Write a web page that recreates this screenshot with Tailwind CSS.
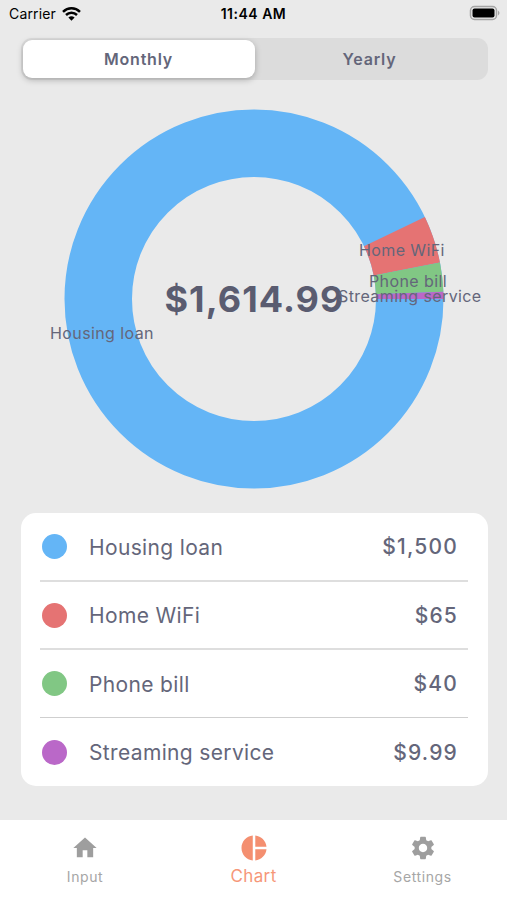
<!DOCTYPE html>
<html lang="en">
<head>
    <meta charset="UTF-8">
    <meta name="viewport" content="width=device-width, initial-scale=1.0">
    <title>Chart</title>
    <script src="https://cdn.jsdelivr.net/npm/@tailwindcss/browser@4"></script>
</head>
<body class="w-[507px] h-[900px] overflow-hidden flex flex-col bg-[#eaeaea] text-[#64667a] font-[Inter,sans-serif]">
    <!-- status bar -->
    <header class="h-[38px] shrink-0 grid grid-cols-3 items-start pt-1 pl-[9px] pr-[7px] text-black text-[14px] leading-5">
        <div class="flex items-center gap-[6px]">
            <span class="tracking-[0.15px]">Carrier</span>
            <svg class="w-[19px] h-[14px] -mt-px" viewBox="0 0 19 14" fill="none" stroke="#000" stroke-width="2.5">
                <path d="M1 4.8a12.2 12.2 0 0 1 17 0" />
                <path d="M4 8a8 8 0 0 1 11 0" />
                <path d="M9.5 13.7L6.4 10.6a4.5 4.5 0 0 1 6.2 0z" fill="#000" stroke="none" />
            </svg>
        </div>
        <div class="text-center font-semibold whitespace-nowrap tracking-[0.5px] pr-[2px]">11:44 AM</div>
        <svg class="w-[31px] h-[16px] justify-self-end mt-[1px]" viewBox="0 0 31 16">
            <rect x="1.5" y="1.5" width="26" height="13" rx="4" fill="#eaeaea" stroke="#a5a5a5" stroke-width="1.5" />
            <rect x="3.5" y="3.5" width="22" height="9" rx="2" fill="#000" />
            <path d="M29 5.5q3 2.5 0 5z" fill="#a5a5a5" />
        </svg>
    </header>

    <!-- period switch -->
    <div class="ml-[21px] w-[467px] h-[42px] shrink-0 rounded-[11px] bg-[#dcdcdc] p-[2px] flex text-[16px] font-semibold tracking-[0.8px]">
        <button class="w-[232px] rounded-[9px] bg-white pr-px shadow-[0_2px_6px_rgba(0,0,0,0.25)]">Monthly</button>
        <button class="flex-1 pr-[2px]">Yearly</button>
    </div>

    <!-- donut: the loan fills the ring, the smaller slices lie on it as dashes measured in dollars -->
    <svg class="w-[507px] h-[433px] shrink-0" viewBox="0 80 507 433">
        <g fill="none" stroke-width="67.5">
            <circle cx="254" cy="299" r="155.75" stroke="#64b5f6" />
            <circle cx="254" cy="299" r="155.75" pathLength="1614.99" stroke="#e57373" stroke-dasharray="65 1549.99" stroke-dashoffset="-1500" />
            <circle cx="254" cy="299" r="155.75" pathLength="1614.99" stroke="#81c784" stroke-dasharray="40 1574.99" stroke-dashoffset="-1565" />
            <circle cx="254" cy="299" r="155.75" pathLength="1614.99" stroke="#ba68c8" stroke-dasharray="9.99 1605" stroke-dashoffset="-1605" />
        </g>
        <text x="164.5" y="311.5" class="text-[36px] font-bold tracking-[1.05px]" fill="#5a5c70">$1,614.99</text>
        <g class="text-[16px] tracking-[0.4px]" fill="#64667a">
            <text x="50" y="339">Housing loan</text>
            <text x="359" y="255.5">Home WiFi</text>
            <text x="369" y="286.5">Phone bill</text>
            <text x="338" y="301.5">Streaming service</text>
        </g>
    </svg>

    <!-- expenses -->
    <ul class="ml-[21px] w-[467px] h-[273px] shrink-0 rounded-[15px] bg-white pl-[19px] pr-[20px] flex flex-col text-[21px] tracking-[0.35px]">
        <li class="h-[69px] flex items-center border-b-2 border-[#dedede] pl-[2px] pr-[10px]">
            <span class="size-[25px] rounded-full bg-[#64b5f6]"></span>
            <span class="ml-[22px] pt-[2px] flex-1">Housing loan</span>
            <span class="font-medium tracking-[1.2px]">$1,500</span>
        </li>
        <li class="h-[68px] flex items-center border-b-2 border-[#dedede] pl-[2px] pr-[10px]">
            <span class="size-[25px] rounded-full bg-[#e57373]"></span>
            <span class="ml-[22px] pt-[2px] flex-1">Home WiFi</span>
            <span class="pt-px font-medium tracking-[1.2px]">$65</span>
        </li>
        <li class="h-[68px] flex items-center border-b border-[#cfcfcf] pl-[2px] pr-[10px]">
            <span class="size-[25px] rounded-full bg-[#81c784]"></span>
            <span class="ml-[22px] pt-[2px] flex-1">Phone bill</span>
            <span class="font-medium tracking-[1.2px]">$40</span>
        </li>
        <li class="h-[68px] flex items-center pl-[2px] pr-[10px]">
            <span class="size-[25px] rounded-full bg-[#ba68c8]"></span>
            <span class="ml-[22px] pt-[2px] flex-1">Streaming service</span>
            <span class="pt-px font-medium tracking-[1.2px]">$9.99</span>
        </li>
    </ul>

    <!-- tabs -->
    <nav class="mt-auto h-[80px] shrink-0 bg-white grid grid-cols-3 text-[14px] tracking-[0.6px] text-[#a6a6a6]">
        <a class="flex flex-col items-center pt-[14px]">
            <svg class="size-[28px]" viewBox="0 0 24 24" fill="#9e9e9e"><path d="M10 20v-6h4v6h5v-8h3L12 3 2 12h3v8z" /></svg>
            <span class="mt-[5px] pl-px leading-5">Input</span>
        </a>
        <a class="flex flex-col items-center pt-[13px] text-[17px] tracking-[0.4px] text-[#f69779]">
            <svg class="size-[30px]" viewBox="0 0 24 24" fill="#f48f70"><path d="M11 2v20c-5.07-.5-9-4.79-9-10s3.93-9.5 9-10zm2.03 0v8.99H22c-.47-4.74-4.24-8.52-8.97-8.99zm0 11.01V22c4.74-.47 8.5-4.25 8.97-8.99h-8.97z" /></svg>
            <span class="mt-[3px] leading-5">Chart</span>
        </a>
        <a class="flex flex-col items-center pt-[14px]">
            <svg class="size-[28px]" viewBox="0 0 24 24" fill="#9e9e9e"><path d="M19.14 12.94c.04-.3.06-.61.06-.94 0-.32-.02-.64-.07-.94l2.03-1.58c.18-.14.23-.41.12-.61l-1.92-3.32c-.12-.22-.37-.29-.59-.22l-2.39.96c-.5-.38-1.03-.7-1.62-.94l-.36-2.54c-.04-.24-.24-.41-.48-.41h-3.84c-.24 0-.43.17-.47.41l-.36 2.54c-.59.24-1.13.57-1.62.94l-2.39-.96c-.22-.08-.47 0-.59.22L2.74 8.87c-.12.21-.08.47.12.61l2.03 1.58c-.05.3-.09.63-.09.94s.02.64.07.94l-2.03 1.58c-.18.14-.23.41-.12.61l1.92 3.32c.12.22.37.29.59.22l2.39-.96c.5.38 1.03.7 1.62.94l.36 2.54c.05.24.24.41.48.41h3.84c.24 0 .44-.17.47-.41l.36-2.54c.59-.24 1.13-.56 1.62-.94l2.39.96c.22.08.47 0 .59-.22l1.92-3.32c.12-.22.07-.47-.12-.61l-2.01-1.58zM12 15.6c-1.98 0-3.6-1.62-3.6-3.6s1.62-3.6 3.6-3.6 3.6 1.62 3.6 3.6-1.62 3.6-3.6 3.6z" /></svg>
            <span class="mt-[5px] leading-5">Settings</span>
        </a>
    </nav>
</body>
</html>
